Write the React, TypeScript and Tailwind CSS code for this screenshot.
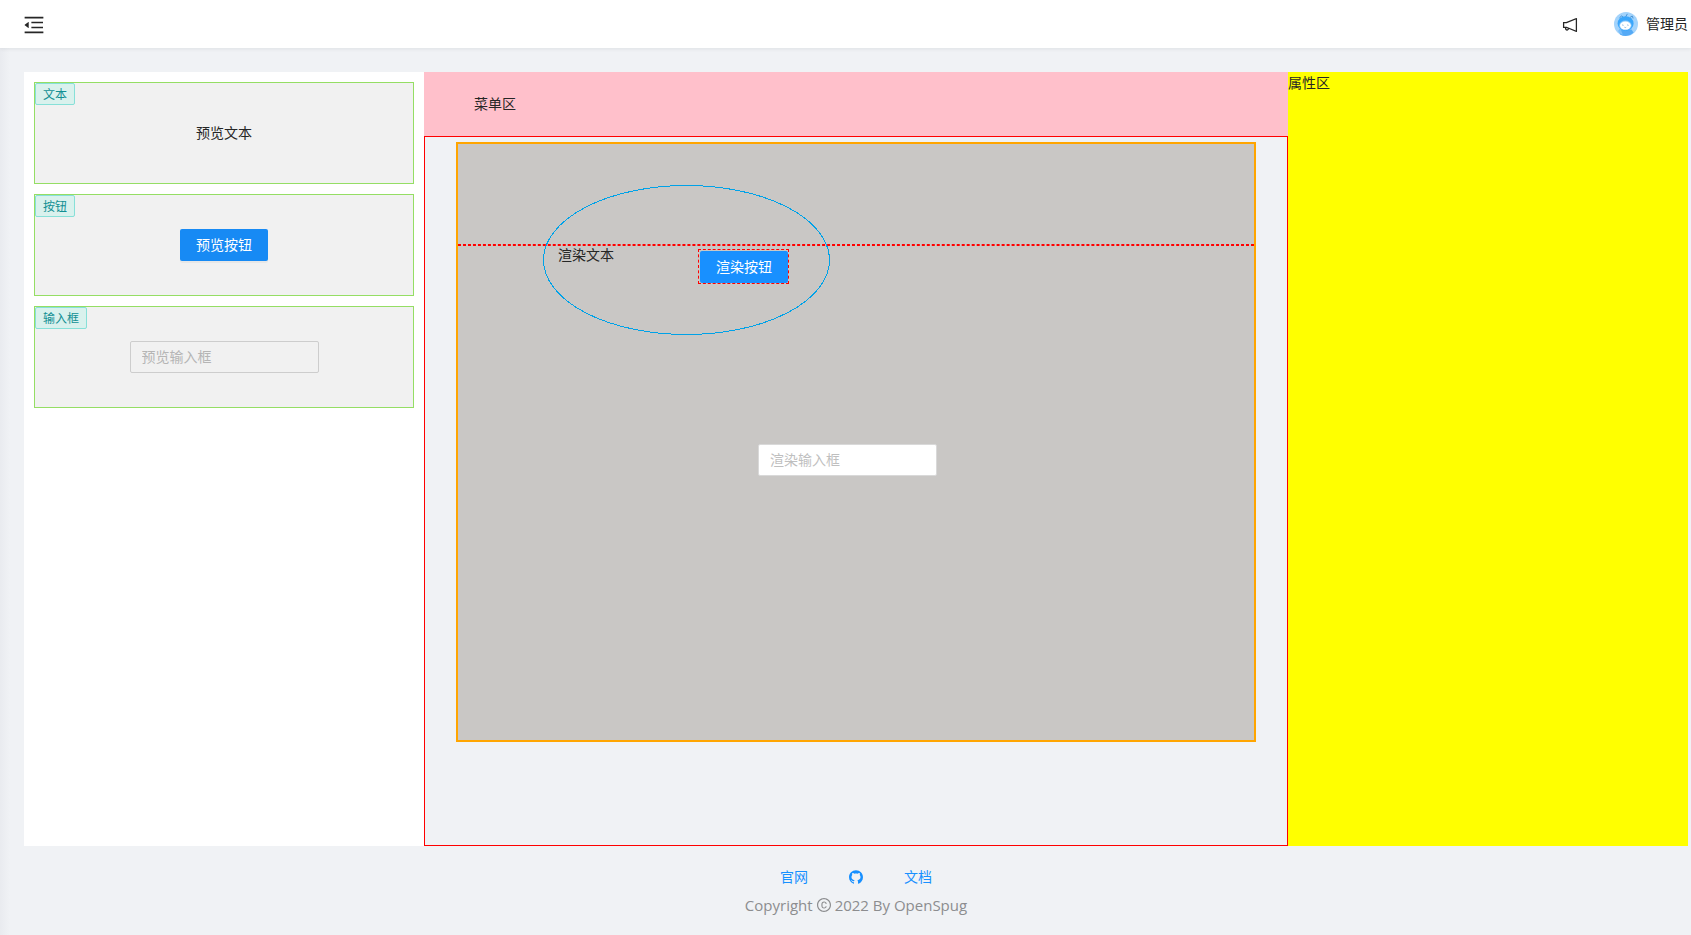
import React from 'react';
import {
  AiFillGithub,
  AiOutlineCopyright,
  AiOutlineMenuFold,
  AiOutlineNotification,
} from 'react-icons/ai';

interface MaterialProps {
  label: string;
  children: React.ReactNode;
}

const Avatar: React.FC = () => (
  <svg viewBox="0 0 24 24" className="size-6" aria-hidden="true">
    <circle cx="12" cy="12" r="12" fill="#a3d3fb" />
    <path d="M6 5.6 7.4 3.8 9 5M11.8 4.6 13.2 2.2M16.4 5.2 18.2 4 19 6" fill="none" stroke="#4a94d6" strokeWidth="1" strokeLinecap="round" />
    <path d="M5 17.5h12.6l2 3.2a12 12 0 0 1-13.6 1.7z" fill="#55aaf6" />
    <path d="M3.8 18.6 7 18l1.8 4.8a12 12 0 0 1-4-2.2z" fill="#7cc0fa" />
    <ellipse cx="11.6" cy="11.6" rx="8" ry="7.4" fill="#3aa6fb" />
    <ellipse cx="11.4" cy="13.4" rx="6.2" ry="4.8" fill="#8cc8fa" />
    <ellipse cx="11.4" cy="13.6" rx="5.4" ry="4" fill="#fff" />
    <path d="M8 13.4q.8-1 1.6 0M13 13.4q.8-1 1.6 0M10.4 15.2q.9.8 1.8 0" fill="none" stroke="#6a9fd0" strokeWidth=".7" />
  </svg>
);

const Material: React.FC<MaterialProps> = ({ label, children }) => (
  <div className="relative flex h-[102px] items-center justify-center border border-[#95de64] bg-[#f1f1f1]">
    <span className="absolute left-0 top-0 rounded-xs border border-[#87e0d8] bg-[#d9f1ed] px-[7px] pt-0.5 text-xs leading-[18px] text-[#128f93]">
      {label}
    </span>
    {children}
  </div>
);

const Header: React.FC = () => (
  <header className="relative z-10 flex h-12 items-center justify-between bg-white pl-[22px] pr-[3px] shadow-[0_1px_4px_rgba(0,21,41,0.08)]">
    <button type="button" aria-label="menu" className="pt-0.5">
      <AiOutlineMenuFold size={24} />
    </button>
    <div className="flex items-center">
      <button type="button" aria-label="notification" className="mr-[35px] pt-0.5">
        <AiOutlineNotification size={18} />
      </button>
      <button type="button" className="flex items-center gap-2">
        <Avatar />
        <span>管理员</span>
      </button>
    </div>
  </header>
);

const Canvas: React.FC = () => (
  <div className="relative mx-auto my-[5px] h-[600px] w-[800px] border-2 border-[#ffa500] bg-[#c9c7c5]">
    {/* alignment guide */}
    <div className="absolute left-0 top-[100px] w-full border border-dashed border-[#ff0000]" />
    <div className="absolute left-[100px] top-[100px]">渲染文本</div>
    <div className="absolute left-[240px] top-[105px] border border-dashed border-[#ff0000] pl-px pt-px">
      <button type="button" className="block h-8 w-[88px] rounded-xs bg-[#1890ff] text-white">
        渲染按钮
      </button>
    </div>
    <input
      aria-label="渲染输入框"
      placeholder="渲染输入框"
      className="absolute left-[300px] top-[300px] h-8 w-[179px] rounded-xs border border-[#d9d9d9] bg-white px-[11px] pb-0.5 placeholder:text-[#bfbfbf]"
    />
    <svg
      className="pointer-events-none absolute left-[85px] top-[41px] h-[150px] w-[287px]"
      viewBox="0 0 287 150"
      aria-hidden="true"
    >
      <ellipse cx="143.5" cy="75" rx="143" ry="74.5" fill="none" stroke="#00a2e8" shapeRendering="crispEdges" />
    </svg>
  </div>
);

const Footer: React.FC = () => (
  <footer className="flex flex-col items-center gap-[6px] pb-[19px] pl-6 pr-[3px] pt-5">
    <nav className="flex items-center gap-10 text-[#1890ff]">
      <a href="#home">官网</a>
      <a href="#github" aria-label="github">
        <AiFillGithub size={16} />
      </a>
      <a href="#docs">文档</a>
    </nav>
    <div className="flex items-center gap-[3px] text-[15px] text-[#8c8d8f]">
      Copyright <AiOutlineCopyright size={16} /> 2022 By OpenSpug
    </div>
  </footer>
);

export default function App() {
  return (
    <div className="flex min-h-screen flex-col bg-[linear-gradient(to_right,#e9ebef,#f0f2f5_10px)] font-['Open_Sans','Noto_Sans_CJK_SC',sans-serif] text-sm leading-[22px] text-[#262626]">
      <Header />
      <main className="grid flex-1 grid-cols-[400px_1fr_400px] pl-6 pr-[3px] pt-6">
        <aside className="flex flex-col gap-[10px] bg-white p-[10px]">
          <Material label="文本">预览文本</Material>
          <Material label="按钮">
            <button type="button" className="h-8 w-[88px] rounded-xs bg-[#178af4] text-white shadow-[0_2px_0_rgba(0,0,0,0.04)]">
              预览按钮
            </button>
          </Material>
          <Material label="输入框">
            <input
              aria-label="预览输入框"
              placeholder="预览输入框"
              className="h-8 w-[189px] rounded-xs border border-[#cdcdcd] bg-transparent px-[11px] pb-0.5 placeholder:text-[#b5b5b5]"
            />
          </Material>
        </aside>
        <section className="flex flex-col">
          <div className="h-16 bg-[#ffc0cb] px-[50px] leading-[64px]">菜单区</div>
          <div className="flex-1 border border-[#ff0000]">
            <Canvas />
          </div>
        </section>
        <aside className="bg-[#ffff00]">属性区</aside>
      </main>
      <Footer />
    </div>
  );
}
